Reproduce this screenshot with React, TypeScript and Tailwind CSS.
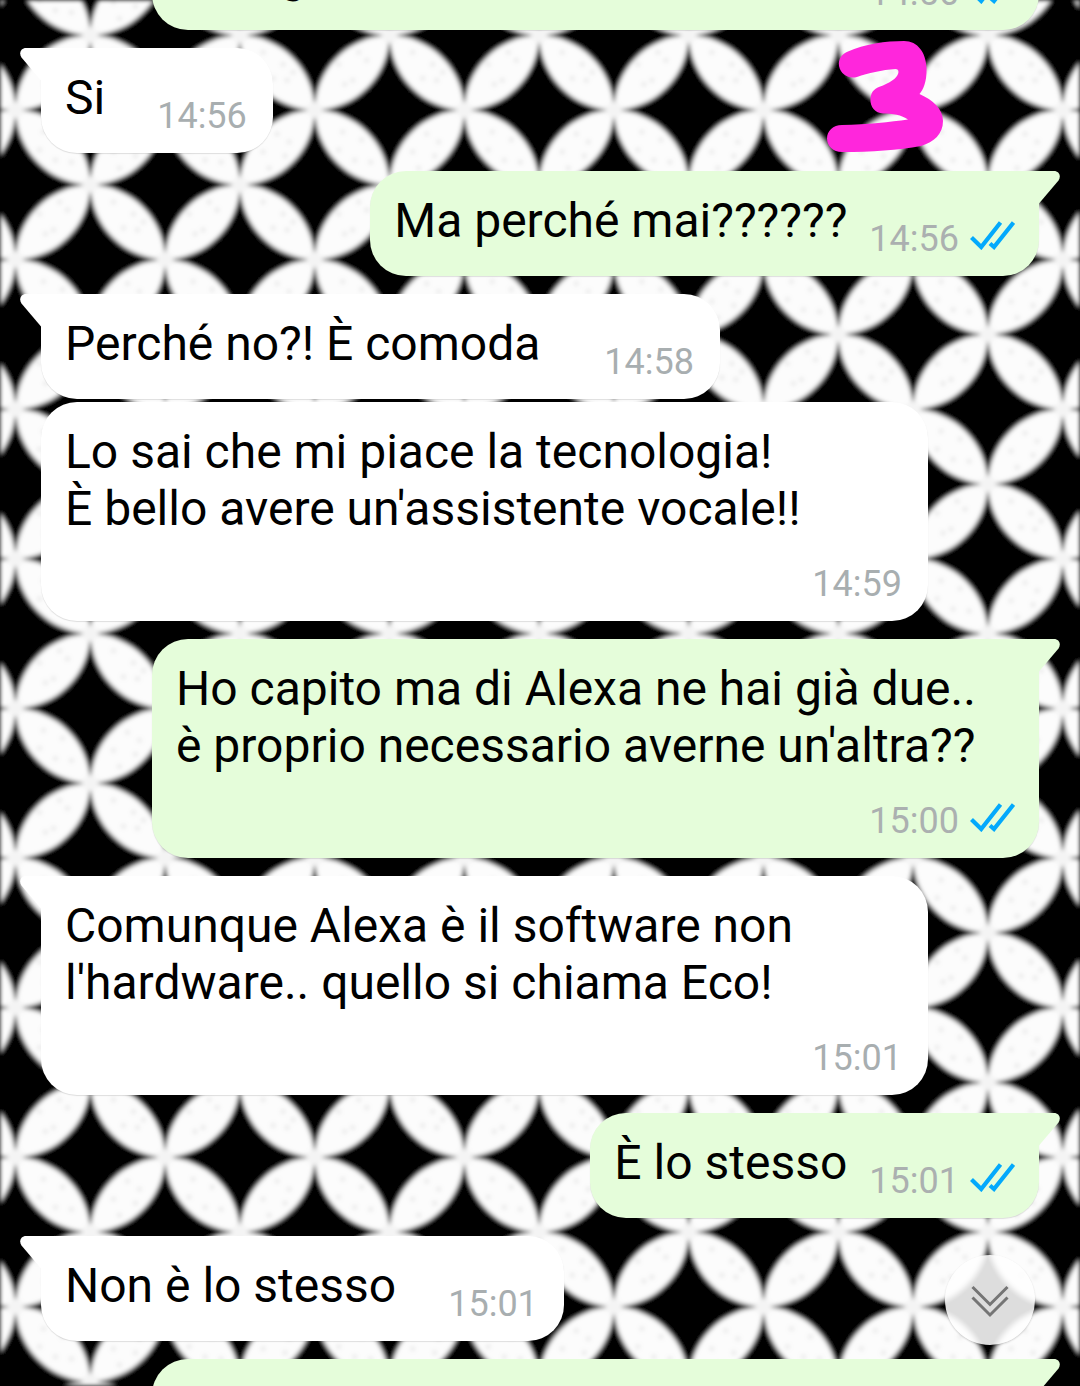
import React from "react";

type Message = {
  id: number;
  from: "in" | "out";
  lines: string[];
  time: string;
  tail?: boolean;
  wide?: boolean;
  inlineTime?: boolean;
  spacing: string;
};

const messages: Message[] = [
  { id: 1, from: "out", lines: ["È lungo"], time: "14:56", wide: true, inlineTime: true, spacing: "-mt-[75px]" },
  { id: 2, from: "in", lines: ["Si"], time: "14:56", tail: true, inlineTime: true, spacing: "mt-[18px]" },
  { id: 3, from: "out", lines: ["Ma perché mai??????"], time: "14:56", tail: true, inlineTime: true, spacing: "mt-[18px]" },
  { id: 4, from: "in", lines: ["Perché no?! È comoda "], time: "14:58", tail: true, inlineTime: true, spacing: "mt-[18px]" },
  { id: 5, from: "in", lines: ["Lo sai che mi piace la tecnologia!", "È bello avere un'assistente vocale!!"], time: "14:59", wide: true, spacing: "mt-[3px]" },
  { id: 6, from: "out", lines: ["Ho capito ma di Alexa ne hai già due..", "è proprio necessario averne un'altra??"], time: "15:00", tail: true, wide: true, spacing: "mt-[18px]" },
  { id: 7, from: "in", lines: ["Comunque Alexa è il software non", "l'hardware.. quello si chiama Eco!"], time: "15:01", tail: true, wide: true, spacing: "mt-[18px]" },
  { id: 8, from: "out", lines: ["È lo stesso"], time: "15:01", tail: true, inlineTime: true, spacing: "mt-[18px]" },
  { id: 9, from: "in", lines: ["Non è lo stesso"], time: "15:01", tail: true, inlineTime: true, spacing: "mt-[18px]" },
  { id: 10, from: "out", lines: ["Va bene"], time: "15:02", tail: true, wide: true, inlineTime: true, spacing: "mt-[18px]" },
];

const specks = [
  [28, 22], [47, 30], [40, 50], [24, 40], [56, 52], [98, 42], [112, 24], [120, 46], [104, 58], [124, 32],
  [24, 104], [38, 120], [52, 100], [44, 92], [30, 124], [98, 92], [118, 104], [108, 118], [122, 120], [128, 112],
];

/* Interlaced-petal wallpaper: four lenses meet at every lattice node. */
function Wallpaper() {
  return (
    <svg className="absolute inset-0 h-full w-full" aria-hidden="true">
      <defs>
        <pattern id="petals" x="15.5" y="110" width="149.6" height="149.6" patternUnits="userSpaceOnUse">
          <rect width="149.6" height="149.6" fill="#020202" />
          <g fill="#fcfcfc">
            <path d="M0 0A75.500 75.500 0 0 1 74.8 74.8A75.500 75.500 0 0 1 0 0Z" />
            <path d="M149.6 0A75.500 75.500 0 0 1 74.8 74.8A75.500 75.500 0 0 1 149.6 0Z" />
            <path d="M0 149.6A75.500 75.500 0 0 1 74.8 74.8A75.500 75.500 0 0 1 0 149.6Z" />
            <path d="M149.6 149.6A75.500 75.500 0 0 1 74.8 74.8A75.500 75.500 0 0 1 149.6 149.6Z" />
          </g>
          <g fill="#f4f4f4">
            <circle cx="0" cy="0" r="8" />
            <circle cx="149.6" cy="0" r="8" />
            <circle cx="0" cy="149.6" r="8" />
            <circle cx="149.6" cy="149.6" r="8" />
            <circle cx="74.8" cy="74.8" r="8" />
          </g>
          <g fill="#dedede">
            {specks.map(([cx, cy]) => (
              <circle key={`${cx}-${cy}`} cx={cx} cy={cy} r="2" />
            ))}
          </g>
        </pattern>
        <filter id="soften" x="0" y="0" width="100%" height="100%">
          <feGaussianBlur stdDeviation="2.2" edgeMode="duplicate" />
        </filter>
      </defs>
      <rect width="100%" height="100%" fill="url(#petals)" filter="url(#soften)" />
    </svg>
  );
}

function Tail({ side }: { side: "in" | "out" }) {
  return side === "in" ? (
    <svg className="absolute top-0 -left-[21px] h-[33px] w-[22px] text-white" viewBox="0 0 22 33" aria-hidden="true">
      <path d="M22 0H6C1 0-1.500 5 1.500 9.500L21 32.500H22Z" fill="currentColor" />
    </svg>
  ) : (
    <svg className="absolute top-0 -right-[21px] h-[33px] w-[22px] text-[#e5fdda]" viewBox="0 0 22 33" aria-hidden="true">
      <path d="M0 0H16C21 0 23.500 5 20.500 9.500L1 32.500H0Z" fill="currentColor" />
    </svg>
  );
}

function ReadTicks() {
  return (
    <svg className="mb-[10px] ml-[10px] h-[30px] w-[46px]" viewBox="0 0 46 30" fill="none" stroke="#03a9fc" strokeWidth="4.2" role="img" aria-label="Letto">
      <path d="M2.500 17.500L12.200 27L31.500 2.500" />
      <path d="M21 23.500L25 27L44.500 2.500" />
    </svg>
  );
}

function Bubble({ message }: { message: Message }) {
  const { from, lines, time, tail, wide, inlineTime, spacing } = message;
  const out = from === "out";
  const tone = out ? "self-end bg-[#e5fdda]" : "self-start bg-white";
  const corner = tail ? (out ? "rounded-tr-none" : "rounded-tl-none") : "";
  const flow = inlineTime ? "flex-row items-end justify-between" : "flex-col";
  const gap = inlineTime ? (out ? "gap-[22px]" : "gap-[52px]") : "gap-[26px]";
  return (
    <li
      className={`relative flex shrink-0 rounded-[36px] pt-[21px] pb-4 pl-6 shadow-[0_1px_1px_rgba(0,0,0,0.12)] ${out ? "pr-6" : "pr-[26px]"} ${tone} ${corner} ${flow} ${gap} ${spacing} ${wide ? "w-full max-w-[887px]" : ""}`}
    >
      {tail && <Tail side={from} />}
      <p className={`text-[48px] leading-[57px] whitespace-pre text-black ${inlineTime ? "mb-[11px]" : ""}`}>
        {lines.join("\n")}
      </p>
      <div className={`flex items-end self-end text-[36px] leading-[42px] ${out ? "text-[#abb0b0]" : "text-[#a8aeb0]"}`}>
        <time>{time}</time>
        {out && <ReadTicks />}
      </div>
    </li>
  );
}

export default function App() {
  return (
    <main className="relative h-screen overflow-hidden bg-black font-[Roboto,sans-serif]">
      <Wallpaper />
      <ul className="relative flex h-full flex-col px-[41px]">
        {messages.map((message) => (
          <Bubble key={message.id} message={message} />
        ))}
      </ul>
      <svg className="absolute top-9 right-[130px] h-[122px] w-[130px]" viewBox="820 36 130 122" role="img" aria-label="3">
        <path
          d="M848 51.500C864 44 886 41 904 41C918 41 926 53 926.500 68C927 82 923 90 919.500 94C933 100 943 109 943 121C943 134 934 142 921 146C898 150 872 152 842 152C833 152 827 146 827 138.500C827 131 833 125 842 125C868 124.500 890 122 908 119.500C902 115 892 113.500 883 113.500C875 113 870 107 870.500 99C871 91 875 88 883 85.500C893 81 898 77 898.500 72C898.500 70 897.500 69 895.500 69C882 70 868 73 857 77C849 79 841 75 839 66C838 59 842 54 848 51.500Z"
          fill="#ff26dc"
        />
      </svg>
      <button
        type="button"
        aria-label="Vai in fondo"
        className="absolute right-[45px] bottom-[41px] size-[90px] rounded-full bg-[#fefefe]/87 shadow-[0_1px_2px_rgba(0,0,0,0.2)]"
      >
        <svg viewBox="0 0 90 90" className="size-full" fill="none" stroke="#757575" strokeWidth="3">
          <path d="M27.500 32L45 49.500L62.500 32" />
          <path d="M27.500 42.500L45 60L62.500 42.500" />
        </svg>
      </button>
    </main>
  );
}
